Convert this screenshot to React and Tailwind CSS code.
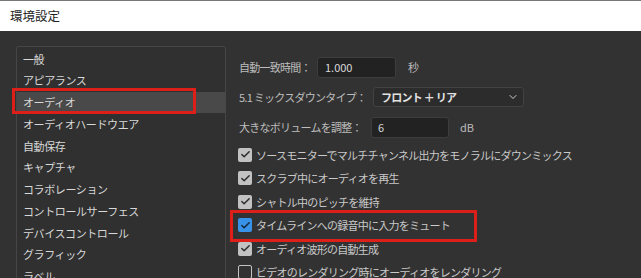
import { ChevronDown, Check } from "lucide-react";

const font = { fontFamily: '"Noto Sans CJK JP", "Noto Sans", sans-serif' };

const menu = [
  "一般",
  "アピアランス",
  "オーディオ",
  "オーディオハードウエア",
  "自動保存",
  "キャプチャ",
  "コラボレーション",
  "コントロールサーフェス",
  "デバイスコントロール",
  "グラフィック",
  "ラベル",
];

const options = [
  { label: "ソースモニターでマルチチャンネル出力をモノラルにダウンミックス", state: "on" },
  { label: "スクラブ中にオーディオを再生", state: "on" },
  { label: "シャトル中のピッチを維持", state: "on" },
  { label: "タイムラインへの録音中に入力をミュート", state: "focus" },
  { label: "オーディオ波形の自動生成", state: "on" },
  { label: "ビデオのレンダリング時にオーディオをレンダリング", state: "off" },
];

function Box({ state }) {
  if (state === "off") {
    return <span className="w-[14px] h-[14px] rounded-[2px] border-[1.5px] border-[#c4c4c4]" />;
  }
  return (
    <span
      className={`w-[14px] h-[14px] rounded-[2px] flex items-center justify-center ${
        state === "focus" ? "bg-[#3892e8]" : "bg-[#c2c2c2]"
      }`}
    >
      <Check size={11} strokeWidth={3.2} className={state === "focus" ? "text-[#12263a]" : "text-[#2c2c2c]"} />
    </span>
  );
}

export default function App() {
  return (
    <div className="relative w-[641px] h-[278px] overflow-hidden bg-[#323232]" style={font}>
      {/* タイトルバー */}
      <div className="h-[31px] bg-white border-t border-[#777] flex items-center pl-[10px]">
        <span className="text-[12.5px] text-[#1e1e1e]">環境設定</span>
      </div>

      <div className="flex pt-[15px] pl-[16px]">
        {/* カテゴリ一覧 */}
        <div className="w-[210px] h-[260px] border border-[#464646] rounded-[3px] bg-[#303030] pt-[1px]">
          {menu.map((m, i) => (
            <div
              key={m}
              className={`h-[21.75px] flex items-center pl-[6px] text-[11px] tracking-[-0.4px] text-[#d8d8d8] ${
                i === 2 ? "bg-[#494949]" : ""
              }`}
            >
              {m}
            </div>
          ))}
        </div>

        {/* 設定項目 */}
        <div className="ml-[13px] pt-[6px] text-[11px] tracking-[-0.75px]">
          <div className="h-[30px] flex items-center text-[#bdbdbd]">
            <span className="w-[78px]">自動一致時間：</span>
            <div className="w-[79px] h-[21px] bg-[#222] border border-[#3d3d3d] rounded-[3px] flex items-center pl-[7px] text-[#d8d8d8] tracking-normal">
              1.000
            </div>
            <span className="ml-[12px]">秒</span>
          </div>
          <div className="h-[30px] flex items-center text-[#bdbdbd]">
            <span className="w-[134px]">5.1 ミックスダウンタイプ：</span>
            <div className="w-[151px] h-[20px] bg-[#2c2c2c] border border-[#424242] rounded-[3px] flex items-center justify-between pl-[7px] pr-[4px] text-[#e2e2e2] font-semibold">
              <span className="whitespace-pre">フロント ＋ リア</span>
              <ChevronDown size={12} strokeWidth={2} className="text-[#cfcfcf]" />
            </div>
          </div>
          <div className="h-[30px] flex items-center text-[#bdbdbd]">
            <span className="w-[132px]">大きなボリュームを調整：</span>
            <div className="w-[78px] h-[21px] bg-[#222] border border-[#3d3d3d] rounded-[3px] flex items-center pl-[6px] text-[#d8d8d8]">
              6
            </div>
            <span className="ml-[11px] tracking-normal">dB</span>
          </div>

          <div className="mt-[1px]">
            {options.map((o) => (
              <div key={o.label} className="h-[23.5px] flex items-center gap-[4px] -ml-[1px] text-[#c9c9c9]">
                <Box state={o.state} />
                <span>{o.label}</span>
              </div>
            ))}
          </div>
        </div>
      </div>

      {/* 注釈の赤枠 */}
      <div className="absolute left-[12px] top-[88px] w-[184px] h-[26px] border-[3px] border-[#dd1f1a]" />
      <div className="absolute left-[230px] top-[210px] w-[247px] h-[32px] border-[3px] border-[#dd1f1a]" />
    </div>
  );
}
